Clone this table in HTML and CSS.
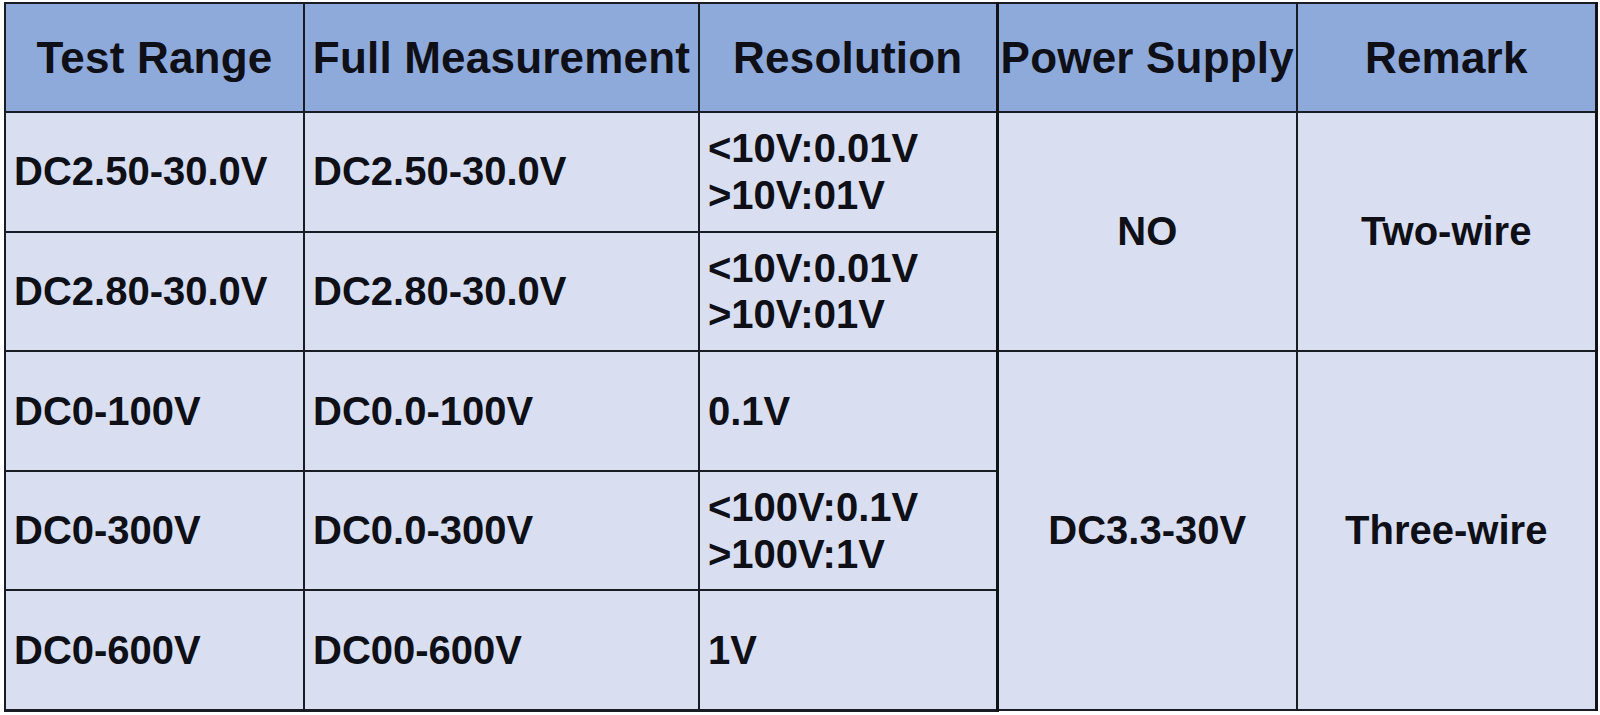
FILE: index.html
```html
<!DOCTYPE html>
<html>
<head>
<meta charset="utf-8">
<link rel="stylesheet" href="styles.css">
</head>
<body>
<table class="spec">
  <colgroup>
    <col class="c1"><col class="c2"><col class="c3"><col class="c4"><col class="c5">
  </colgroup>
  <thead>
    <tr class="head">
      <th>Test Range</th>
      <th>Full Measurement</th>
      <th>Resolution</th>
      <th class="thick">Power Supply</th>
      <th>Remark</th>
    </tr>
  </thead>
  <tbody>
    <tr>
      <td>DC2.50-30.0V</td>
      <td>DC2.50-30.0V</td>
      <td>&lt;10V:0.01V<br>&gt;10V:01V</td>
      <td class="mid thick" rowspan="2">NO</td>
      <td class="mid" rowspan="2">Two-wire</td>
    </tr>
    <tr>
      <td>DC2.80-30.0V</td>
      <td>DC2.80-30.0V</td>
      <td>&lt;10V:0.01V<br>&gt;10V:01V</td>
    </tr>
    <tr>
      <td>DC0-100V</td>
      <td>DC0.0-100V</td>
      <td>0.1V</td>
      <td class="mid thick" rowspan="3">DC3.3-30V</td>
      <td class="mid" rowspan="3">Three-wire</td>
    </tr>
    <tr>
      <td>DC0-300V</td>
      <td>DC0.0-300V</td>
      <td>&lt;100V:0.1V<br>&gt;100V:1V</td>
    </tr>
    <tr class="last">
      <td>DC0-600V</td>
      <td>DC00-600V</td>
      <td>1V</td>
    </tr>
  </tbody>
</table>
</body>
</html>
```
FILE: styles.css
```css
html, body {
  margin: 0;
  padding: 0;
  background: #ffffff;
}
.spec {
  margin: 2px 0 0 4px;
  border-collapse: collapse;
  table-layout: fixed;
  width: 1593px;
  font-family: "Liberation Sans", Arial, sans-serif;
  font-weight: bold;
  color: #0e0f17;
  border: 2px solid #2a2d38;
}
.c1 { width: 299px; }
.c2 { width: 395px; }
.c3 { width: 298px; }
.c4 { width: 300px; }
.c5 { width: 299px; }
.spec th, .spec td {
  border: 2px solid #1a1c24;
  padding: 0 0 0 8px;
  vertical-align: middle;
  white-space: nowrap;
  overflow: visible;
}
.spec th {
  background: #8eaadb;
  font-size: 44px;
  height: 107px;
  text-align: center;
  padding: 0;
  letter-spacing: 0.2px;
}
.spec td {
  background: #d9dff1;
  font-size: 40px;
  line-height: 1.17;
  height: 117.6px;
  text-align: left;
}
.spec td.mid {
  text-align: center;
  padding: 0;
}
.spec .thick {
  border-left: 3px solid #111319;
}
.spec tr.last td {
  border-bottom-width: 3px;
}
.spec td:last-child, .spec th:last-child {
  border-right: 3px solid #111319;
}
```
